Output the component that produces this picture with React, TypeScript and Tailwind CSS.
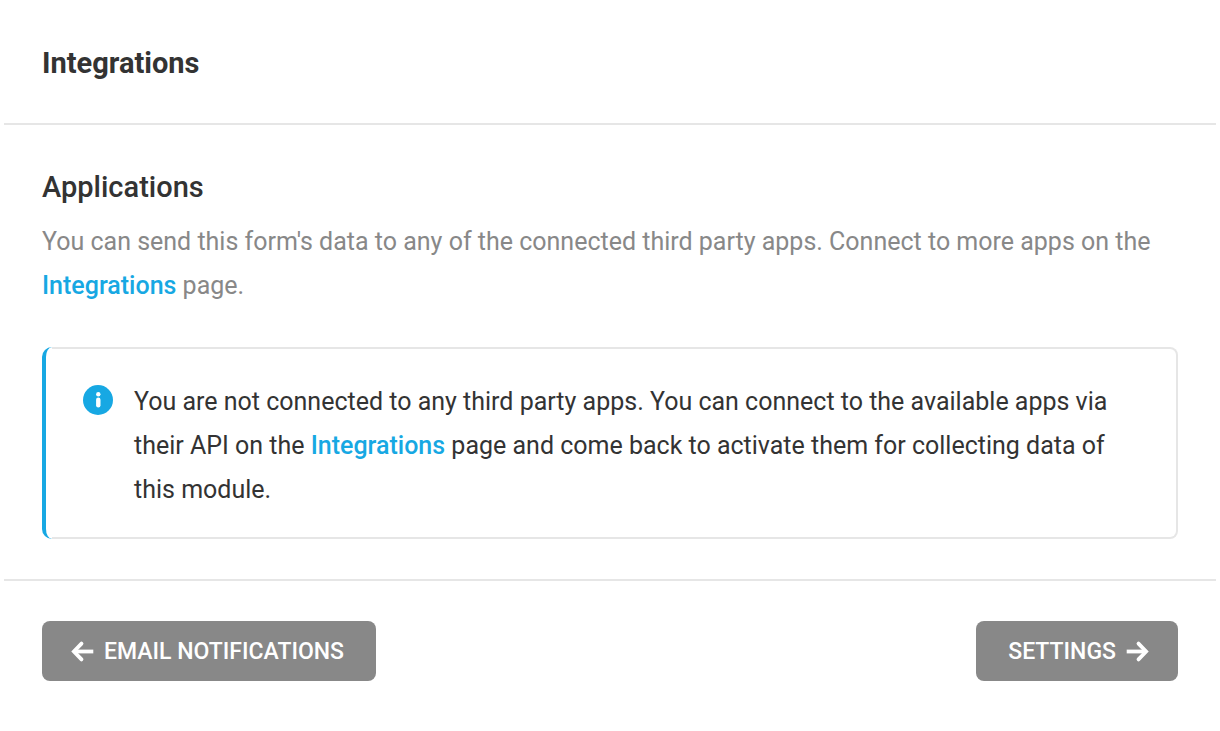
import React from 'react';

const linkClass = 'font-medium text-[#17a8e3]';

const InfoIcon: React.FC = () => (
  <svg viewBox="0 0 30 30" className="mt-[5px] size-[30px] shrink-0" aria-hidden="true">
    <circle cx="15" cy="15" r="15" fill="#17a8e3" />
    <circle cx="15.3" cy="9.2" r="2.2" fill="#fff" />
    <rect x="13.1" y="12.6" width="4.4" height="9.8" rx="2.2" fill="#fff" />
  </svg>
);

const ArrowIcon: React.FC<{ direction: 'left' | 'right' }> = ({ direction }) => (
  <svg
    viewBox="0 0 24 24"
    className="size-6 shrink-0"
    fill="none"
    stroke="currentColor"
    strokeWidth="3.8"
    aria-hidden="true"
  >
    {direction === 'left' ? (
      <>
        <path d="M11.5 3.6 3.9 11.5l7.6 7.9" strokeLinecap="round" />
        <path d="M4.5 11.5h18.8" />
      </>
    ) : (
      <>
        <path d="M12.5 3.6l7.6 7.9-7.6 7.9" strokeLinecap="round" />
        <path d="M19.5 11.5H0.7" />
      </>
    )}
  </svg>
);

const buttonClass =
  'flex h-[60px] items-center gap-[10px] rounded-lg bg-[#888888] pt-px text-[23px] font-medium text-white uppercase';

const App: React.FC = () => {
  return (
    <main className="min-h-screen bg-white px-1 font-[Roboto,sans-serif] text-[25px] leading-[44px] text-[#333333]">
      {/* Header */}
      <header className="border-b-2 border-[#e6e6e6] px-[38px] pt-[41px] pb-[38px]">
        <h1 className="text-[29px] font-bold">Integrations</h1>
      </header>

      {/* Body */}
      <section className="px-[38px] py-10">
        <h2 className="mb-[11px] text-[29px] font-medium">Applications</h2>
        <p className="text-[#888888]">
          You can send this form's data to any of the connected third party apps. Connect to more apps on the{' '}
          <a href="#integrations" className={linkClass}>Integrations</a> page.
        </p>

        {/* Notice */}
        <div className="relative mt-[39px] ml-[10px] flex gap-[21px] rounded-r-lg border-2 border-l-0 border-[#e6e6e6] pt-[31px] pr-[58px] pb-[25px] pl-[31px] before:absolute before:-inset-y-0.5 before:-left-[10px] before:w-[10px] before:rounded-l-[10px] before:border-l-4 before:border-[#17a8e3]">
          <InfoIcon />
          <p>
            You are not connected to any third party apps. You can connect to the available apps via their API on the{' '}
            <a href="#integrations" className={linkClass}>Integrations</a> page and come back to activate them for
            collecting data of this module.
          </p>
        </div>
      </section>

      {/* Footer navigation */}
      <footer className="flex items-center justify-between border-t-2 border-[#e6e6e6] px-[38px] py-10">
        <button type="button" className={`${buttonClass} pr-8 pl-7`}>
          <ArrowIcon direction="left" />
          Email Notifications
        </button>
        <button type="button" className={`${buttonClass} pr-7 pl-8`}>
          Settings
          <ArrowIcon direction="right" />
        </button>
      </footer>
    </main>
  );
};

export default App;
